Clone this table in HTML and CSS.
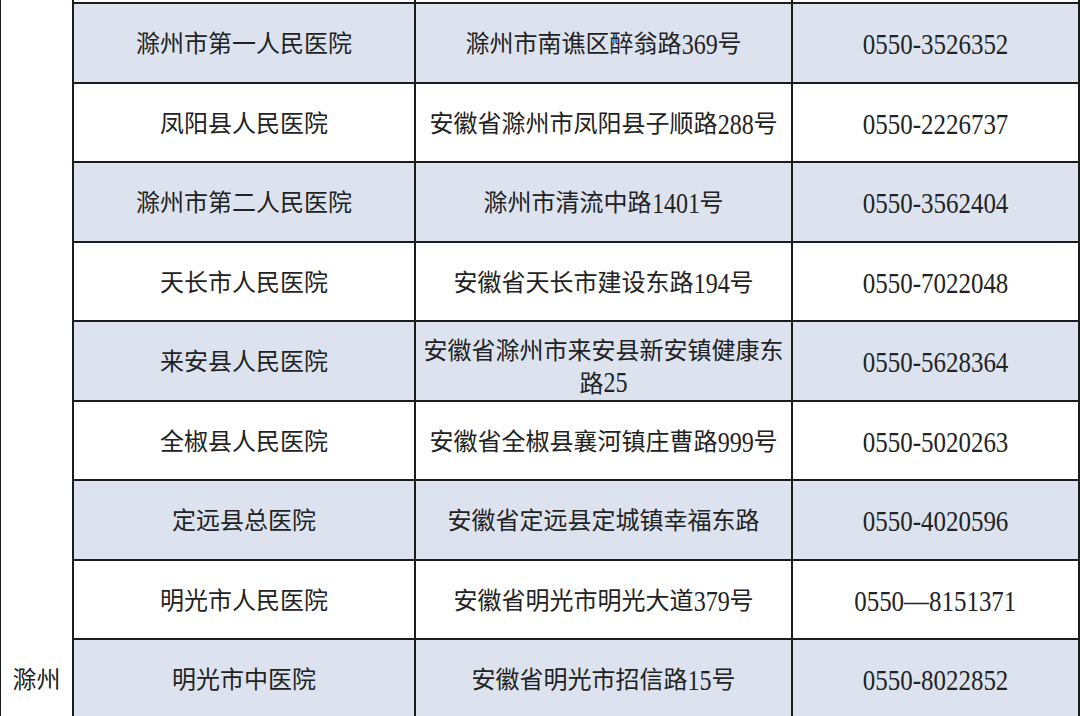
FILE: index.html
```html
<!DOCTYPE html>
<html lang="zh-CN">
<head>
<meta charset="utf-8">
<title>滁州 医院</title>
<link rel="stylesheet" href="styles.css">
</head>
<body>
<div class="sheet">
  <div class="city"><span>滁州</span></div>

  <div class="cell cut"></div><div class="cell cut"></div><div class="cell cut"></div>

  <div class="cell blue">滁州市第一人民医院</div>
  <div class="cell blue">滁州市南谯区醉翁路<span class="n n3">369</span>号</div>
  <div class="cell blue"><span class="tel">0550-3526352</span></div>

  <div class="cell">凤阳县人民医院</div>
  <div class="cell">安徽省滁州市凤阳县子顺路<span class="n n3">288</span>号</div>
  <div class="cell"><span class="tel">0550-2226737</span></div>

  <div class="cell blue">滁州市第二人民医院</div>
  <div class="cell blue">滁州市清流中路<span class="n n4">1401</span>号</div>
  <div class="cell blue"><span class="tel">0550-3562404</span></div>

  <div class="cell">天长市人民医院</div>
  <div class="cell">安徽省天长市建设东路<span class="n n3">194</span>号</div>
  <div class="cell"><span class="tel">0550-7022048</span></div>

  <div class="cell blue">来安县人民医院</div>
  <div class="cell blue two">安徽省滁州市来安县新安镇健康东<br>路<span class="n n2">25</span></div>
  <div class="cell blue"><span class="tel">0550-5628364</span></div>

  <div class="cell">全椒县人民医院</div>
  <div class="cell">安徽省全椒县襄河镇庄曹路<span class="n n3">999</span>号</div>
  <div class="cell"><span class="tel">0550-5020263</span></div>

  <div class="cell blue">定远县总医院</div>
  <div class="cell blue">安徽省定远县定城镇幸福东路</div>
  <div class="cell blue"><span class="tel">0550-4020596</span></div>

  <div class="cell">明光市人民医院</div>
  <div class="cell">安徽省明光市明光大道<span class="n n3">379</span>号</div>
  <div class="cell"><span class="tel">0550—8151371</span></div>

  <div class="cell blue">明光市中医院</div>
  <div class="cell blue">安徽省明光市招信路<span class="n n2">15</span>号</div>
  <div class="cell blue"><span class="tel">0550-8022852</span></div>
</div>
</body>
</html>
```

FILE: styles.css
```css
html, body {
  margin: 0;
  padding: 0;
  overflow: hidden;
  background: #ffffff;
}

body {
  width: 1080px;
  height: 716px;
  font-family: "Liberation Serif", "Noto Sans CJK SC", serif;
  font-size: 24px;
  color: #222222;
}

.sheet {
  display: grid;
  grid-template-columns: 71px 340px 375px 1fr;
  grid-template-rows: 2px repeat(9, 77.5px);
  gap: 2px;
  padding: 0 2px 0 1px;
  background: #1c1c1c;
  width: 1080px;
  box-sizing: border-box;
}

.city {
  grid-row: 1 / -1;
  grid-column: 1;
  background: #ffffff;
  display: flex;
  align-items: flex-end;
  justify-content: center;
  padding-bottom: 22px;
  box-sizing: border-box;
  line-height: 32px;
}

.cell {
  background: #ffffff;
  display: flex;
  align-items: center;
  justify-content: center;
  text-align: center;
  line-height: 32px;
  padding: 3px 6px 0;
  white-space: nowrap;
}

.cell.blue {
  background: #dce3ef;
}

.cell.cut {
  padding: 0;
}

.cell.two {
  display: block;
  padding-top: 14px;
  line-height: 31px;
}

/* condensed, tall serif digits like the source's Song-style numerals */
.tel {
  display: inline-block;
  font-size: 29px;
  transform: scaleX(0.86);
}

.n {
  display: inline-block;
  font-size: 29px;
  transform: scaleX(0.83);
}

.n2 { margin: 0 -2.5px; }
.n3 { margin: 0 -3.75px; }
.n4 { margin: 0 -5px; }
```
